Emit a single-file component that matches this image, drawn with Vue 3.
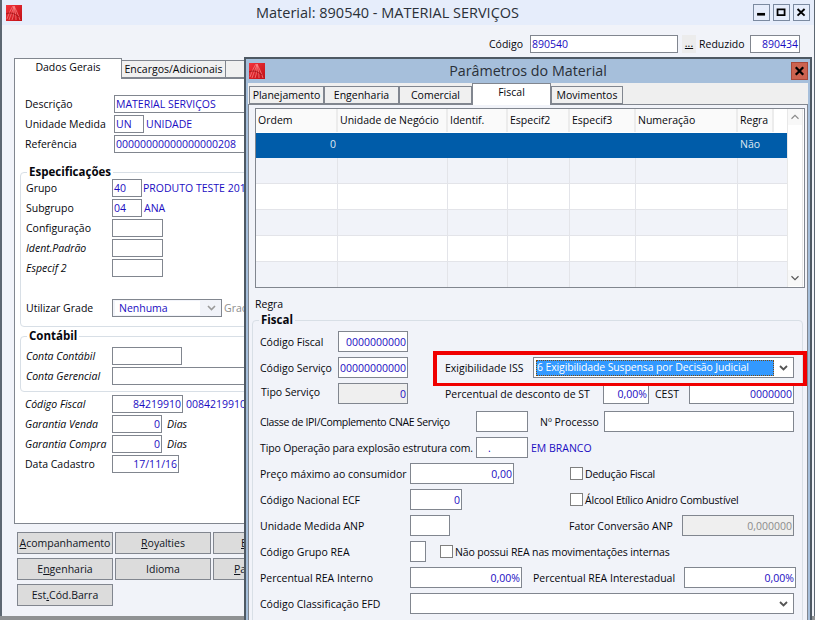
<script setup>
const cols = [
  { t: 'Ordem', c: 'c1' }, { t: 'Unidade de Negócio', c: 'c2' }, { t: 'Identif.', c: 'c3' },
  { t: 'Especif2', c: 'c4' }, { t: 'Especif3', c: 'c5' }, { t: 'Numeração', c: 'c6' },
  { t: 'Regra', c: 'c7' }, { t: '', c: 'c8' }
]
const blankRows = [1, 2, 3, 4, 5]
</script>

<template>
  <div class="screen">
    <div class="win">
      <header class="titlebar">
        <svg class="logo" viewBox="0 0 16 16">
          <defs><linearGradient id="lg" x1="0" y1="0" x2="1" y2="1"><stop offset="0" stop-color="#f4343c"/><stop offset="1" stop-color="#c01016"/></linearGradient></defs>
          <rect width="16" height="16" fill="url(#lg)"/>
          <path d="M1 14 C3 8 5 4 7 1 M3 15 C5 9 7 5 8 1 M6 15 C8 10 8 5 8 1 M10 15 C10 10 9 5 8 2 M14 15 C12 9 10 5 8 1" fill="none" stroke="#ff9c9c" stroke-width=".6"/>
          <path d="M0 9 C4 7 8 8 13 12" fill="none" stroke="#8e0a0e" stroke-width=".7"/>
        </svg>
        <span class="title t-main">Material: 890540 - MATERIAL SERVIÇOS</span>
        <div class="winbtns">
          <span class="wb"><svg viewBox="0 0 16 17"><rect x="3" y="9" width="9" height="3" fill="#000"/></svg></span>
          <span class="wb"><svg viewBox="0 0 16 17"><path d="M3.500 5 H11.500 V11.500 H3.500 Z M3 5 H12" fill="none" stroke="#000" stroke-width="2"/></svg></span>
          <span class="wb"><svg viewBox="0 0 16 17"><path d="M3.500 4.500 L11.500 12 M11.500 4.500 L3.500 12" stroke="#000" stroke-width="2.200"/></svg></span>
        </div>
      </header>

      <div class="coderow">
        <div class="row l1">
          <span class="lb41">Código</span>
          <div class="f w148">890540</div>
          <span class="dots">...</span>
          <span class="lb51 ml3">Reduzido</span>
          <div class="f w50 right">890434</div>
        </div>
      </div>

      <div class="tabs-l">
        <span class="tl active">Dados Gerais</span>
        <span class="tl w104">Encargos/Adicionais</span>
        <span class="tl w60"></span>
      </div>

      <section class="pane-l">
        <div class="row l1"><span class="lb86">Descrição</span><div class="f w200">MATERIAL SERVIÇOS</div></div>
        <div class="row l1"><span class="lb86">Unidade Medida</span><div class="f w30">UN</div><span class="val ml2">UNIDADE</span></div>
        <div class="row l1"><span class="lb86">Referência</span><div class="f w200">00000000000000000208</div></div>

        <fieldset class="grp g1">
          <legend>Especificações</legend>
          <div class="row l2"><span class="lb82">Grupo</span><div class="f w30">40</div><span class="val ml1">PRODUTO TESTE 2016</span></div>
          <div class="row l2"><span class="lb82">Subgrupo</span><div class="f w30">04</div><span class="val ml2">ANA</span></div>
          <div class="row l2"><span class="lb82">Configuração</span><div class="f w51"></div></div>
          <div class="row l2"><span class="lb82 it">Ident.Padrão</span><div class="f w51"></div></div>
          <div class="row l2"><span class="lb82 it">Especif 2</span><div class="f w51"></div></div>
          <div class="row l2 mt22">
            <span class="lb82">Utilizar Grade</span>
            <div class="f w110 combo-off">
              <span class="nenhuma">Nenhuma</span>
              <svg class="chev" viewBox="0 0 9 6"><path d="M1 1 L4.500 4.500 L8 1" fill="none" stroke="#9a9a9a" stroke-width="1.600"/></svg>
            </div>
            <span class="gray ml2">Grade</span>
          </div>
        </fieldset>

        <fieldset class="grp g2">
          <legend>Contábil</legend>
          <div class="row l2"><span class="lb82 it">Conta Contábil</span><div class="f w70"></div></div>
          <div class="row l2"><span class="lb82 it">Conta Gerencial</span><div class="f w200"></div></div>
        </fieldset>

        <div class="lower">
          <div class="row l1"><span class="lb87 it">Código Fiscal</span><div class="f w71 right">84219910</div><span class="val ml3">0084219910</span></div>
          <div class="row l1"><span class="lb87 it">Garantia Venda</span><div class="f w50 right">0</div><span class="it ml5">Dias</span></div>
          <div class="row l1"><span class="lb87 it">Garantia Compra</span><div class="f w50 right">0</div><span class="it ml5">Dias</span></div>
          <div class="row l1"><span class="lb87">Data Cadastro</span><div class="f w67 right">17/11/16</div></div>
        </div>
      </section>

      <div class="btns">
        <div class="btnrow"><button class="b"><u>A</u>companhamento</button><button class="b"><u>R</u>oyalties</button><button class="b part pe"><u>E</u></button></div>
        <div class="btnrow"><button class="b">E<u>n</u>genharia</button><button class="b">Idioma</button><button class="b part pp"><u>P</u>a</button></div>
        <div class="btnrow"><button class="b">Est<u>.</u>Cód.Barra</button></div>
      </div>
    </div>

    <div class="dialog">
      <header class="dlg-title">
        <svg class="logo" viewBox="0 0 16 16">
          <rect width="16" height="16" fill="url(#lg)"/>
          <path d="M1 14 C3 8 5 4 7 1 M3 15 C5 9 7 5 8 1 M6 15 C8 10 8 5 8 1 M10 15 C10 10 9 5 8 2 M14 15 C12 9 10 5 8 1" fill="none" stroke="#ff9c9c" stroke-width=".6"/>
          <path d="M0 9 C4 7 8 8 13 12" fill="none" stroke="#8e0a0e" stroke-width=".7"/>
        </svg>
        <span class="title t-dlg">Parâmetros do Material</span>
        <span class="dlg-x"><svg viewBox="0 0 16 16"><path d="M4 4 L12 12 M12 4 L4 12" stroke="#000" stroke-width="2.400"/></svg></span>
      </header>

      <div class="dlg-tabs">
        <span class="td w75">Planejamento</span>
        <span class="td w75">Engenharia</span>
        <span class="td w73">Comercial</span>
        <span class="td active w79">Fiscal</span>
        <span class="td w72">Movimentos</span>
      </div>

      <section class="dlg-pane">
        <div class="gridbox">
          <div class="gridmain">
            <div class="ghead">
              <span v-for="h in cols" :key="h.c" class="hc" :class="h.c">{{ h.t }}</span>
            </div>
            <div class="grow sel">
              <span class="gc c1 right">0</span><span class="gc c2"></span><span class="gc c3"></span><span class="gc c4"></span><span class="gc c5"></span><span class="gc c6"></span><span class="gc c7">Não</span>
            </div>
            <div v-for="n in blankRows" :key="n" class="grow" :class="{ alt: n % 2 === 1 }">
              <span class="gc c1"></span><span class="gc c2"></span><span class="gc c3"></span><span class="gc c4"></span><span class="gc c5"></span><span class="gc c6"></span><span class="gc c7 wide"></span>
            </div>
          </div>
          <div class="vscroll">
            <svg viewBox="0 0 16 16"><path d="M4 10 L8 6 L12 10" fill="none" stroke="#8a8a8a" stroke-width="1.300"/></svg>
            <svg viewBox="0 0 16 16"><path d="M4 6 L8 10 L12 6" fill="none" stroke="#555" stroke-width="1.300"/></svg>
          </div>
        </div>

        <div class="regra">Regra</div>

        <fieldset class="grp fiscal">
          <legend>Fiscal</legend>
          <div class="row r"><span class="lb78">Código Fiscal</span><div class="f w70 right">0000000000</div></div>
          <div class="row r">
            <span class="lb78">Código Serviço</span><div class="f w70 right">00000000000</div>
            <div class="hl">
              <span class="lb88">Exigibilidade ISS</span>
              <div class="f w261 combo">
                <span class="selected">6 Exigibilidade Suspensa por Decisão Judicial</span>
                <svg class="chev" viewBox="0 0 9 6"><path d="M1 1 L4.500 4.500 L8 1" fill="none" stroke="#555" stroke-width="1.800"/></svg>
              </div>
            </div>
          </div>
          <div class="row r">
            <span class="lb78 nudge">Tipo Serviço</span><div class="f w70 right off blue">0</div>
            <span class="lb158 ml37">Percentual de desconto de ST</span><div class="f w46 right">0,00%</div>
            <span class="ml6 lb34">CEST</span><div class="f w105 right">0000000</div>
          </div>
          <div class="row r mt7">
            <span class="lb216 sq3">Classe de IPI/Complemento CNAE Serviço</span><div class="f w52"></div>
            <span class="lb64 ml12">Nº Processo</span><div class="f w190"></div>
          </div>
          <div class="row r">
            <span class="lb216 sq1">Tipo Operação para explosão estrutura com.</span><div class="f w52 dot">.</div>
            <span class="val ml3">EM BRANCO</span>
          </div>
          <div class="row r">
            <span class="lb150">Preço máximo ao consumidor</span><div class="f w104 right">0,00</div>
            <span class="chk ml56"></span><span class="ml2 sq2">Dedução Fiscal</span>
          </div>
          <div class="row r">
            <span class="lb150">Código Nacional ECF</span><div class="f w52 right">0</div>
            <span class="chk ml108"></span><span class="ml2 sq2">Álcool Etílico Anidro Combustível</span>
          </div>
          <div class="row r">
            <span class="lb150">Unidade Medida ANP</span><div class="f w40"></div>
            <span class="lb113 ml119">Fator Conversão ANP</span><div class="f w112 right off">0,000000</div>
          </div>
          <div class="row r">
            <span class="lb150">Código Grupo REA</span><div class="f w16"></div>
            <span class="chk ml14"></span><span class="ml2 sq1">Não possui REA nas movimentações internas</span>
          </div>
          <div class="row r">
            <span class="lb150">Percentual REA Interno</span><div class="f w112 right">0,00%</div>
            <span class="lb151 ml11">Percentual REA Interestadual</span><div class="f w112 right">0,00%</div>
          </div>
          <div class="row r">
            <span class="lb150">Código Classificação EFD</span>
            <div class="f w384 combo">
              <span></span>
              <svg class="chev" viewBox="0 0 9 6"><path d="M1 1 L4.500 4.500 L8 1" fill="none" stroke="#555" stroke-width="1.800"/></svg>
            </div>
          </div>
        </fieldset>
      </section>
    </div>
  </div>
</template>

<style>
html, body { margin: 0; background: #f1f3f9; }
</style>

<style scoped>
* { box-sizing: border-box; }
.screen {
  position: relative; width: 815px; height: 620px; overflow: hidden;
  font: 10.500px/14px "Open Sans", "Noto Sans", sans-serif; color: #05060c; background: #f1f3f9;
}
.win {
  width: 815px; height: 616px; background: #f1f3f9; overflow: hidden;
  border-left: 2px solid #5d6772; border-right: 1px solid #5d6772;
  display: flex; flex-direction: column;
}
.screen::after { content: ""; display: block; height: 4px; background: #8f9193; }
.titlebar { height: 25px; flex: none; background: #e6edfb; display: flex; align-items: center; padding-left: 4px; padding-right: 4px; }
.logo { width: 16px; height: 16px; flex: none; }
.title { flex: 1; text-align: center; color: #2a3038; }
.t-main { font-size: 14.500px; line-height: 20px; }
.winbtns { display: flex; gap: 3px; }
.wb { width: 17px; height: 17px; border: 1px solid #7b8aa0; display: block; background: #e6edfb; }
.wb svg { display: block; width: 100%; height: 100%; }

.coderow { height: 33px; flex: none; padding: 10px 0 0 487px; }
.dots { width: 14px; height: 18px; line-height: 17px; margin-left: 4px; text-align: center; background: #ececec; text-decoration: underline; }

.f {
  flex: none; height: 100%; border: 1px solid #81868f; background: #fff; color: #1a0cc2;
  padding: 0 1px; overflow: hidden; white-space: nowrap; display: flex; align-items: center;
}
.right { justify-content: flex-end; }
.off { background: #efefef; color: #8c8c8c; }
.off.blue { color: #1a0cc2; }
.val { color: #1a0cc2; white-space: nowrap; }
.gray { color: #8c8c8c; white-space: nowrap; }
.it { font-style: italic; white-space: nowrap; }
.dot { padding-left: 11px; }
.sq1 { letter-spacing: -.13px; }
.sq2 { letter-spacing: -.2px; }
.sq3 { letter-spacing: -.33px; }

.w16 { width: 16px; } .w30 { width: 30px; } .w40 { width: 40px; } .w46 { width: 46px; }
.w50 { width: 50px; } .w51 { width: 51px; } .w52 { width: 52px; } .w67 { width: 67px; }
.w70 { width: 70px; } .w71 { width: 71px; } .w104 { width: 104px; } .w105 { width: 105px; }
.w110 { width: 110px; } .w112 { width: 112px; } .w148 { width: 148px; } .w190 { width: 190px; }
.w200 { width: 200px; } .w261 { width: 261px; } .w384 { width: 384px; }
.w60 { width: 60px; } .w72 { width: 72px; } .w73 { width: 73px; } .w75 { width: 75px; } .w79 { width: 79px; }
.ml1 { margin-left: 1px; } .ml2 { margin-left: 2px; } .ml3 { margin-left: 3px; } .ml5 { margin-left: 5px; }
.ml6 { margin-left: 6px; } .ml11 { margin-left: 11px; } .ml12 { margin-left: 12px; }
.ml14 { margin-left: 14px; } .ml37 { margin-left: 37px; } .ml56 { margin-left: 56px; } .ml108 { margin-left: 108px; }
.ml119 { margin-left: 119px; }
.lb34, .lb41, .lb51, .lb64, .lb78, .lb82, .lb86, .lb87, .lb88, .lb113, .lb150, .lb151, .lb158, .lb216 { flex: none; white-space: nowrap; }
.lb34 { width: 34px; } .lb41 { width: 41px; } .lb51 { width: 51px; } .lb64 { width: 64px; } .lb78 { width: 78px; } .lb82 { width: 86px; } .lb86 { width: 89px; }
.lb87 { width: 87px; } .lb88 { width: 88px; } .lb113 { width: 113px; } .lb150 { width: 150px; } .lb151 { width: 151px; }
.lb158 { width: 158px; } .lb216 { width: 216px; }

.tabs-l { flex: none; height: 20px; margin-left: 12px; display: flex; align-items: flex-end; }
.tl { height: 18px; border: 1px solid #81868f; border-left: 0; background: #f0f0f0; text-align: center; white-space: nowrap; line-height: 16px; flex: none; }
.tl.active { height: 21px; width: 108px; margin-bottom: -1px; background: #fff; border-left: 1px solid #81868f; border-bottom: 0; position: relative; z-index: 1; line-height: 16px; }

.pane-l { flex: none; width: 790px; height: 446px; margin-left: 12px; background: #fff; border: 1px solid #81868f; padding: 16px 0 0 10px; }
.row { display: flex; align-items: center; white-space: nowrap; }
.l1 { height: 18px; margin-bottom: 2px; }
.l2 { height: 18px; margin-bottom: 2px; }
.l2:last-child { margin-bottom: 0; }
.mt22 { margin-top: 22px; }

fieldset.grp { margin: 0; min-width: 0; border: 1px solid #d8dfe6; border-radius: 4px; padding: 0; }
.grp legend { font-weight: 700; font-size: 11.500px; margin-left: 1px; padding: 0 2px; height: 14px; line-height: 14px; }
.g1 { margin: 12px 0 0 -5px !important; width: 560px; padding: 0 0 9px 5px !important; }
.g2 { margin: 2px 0 0 -5px !important; width: 560px; padding: 4px 0 6px 5px !important; }
.lower { margin-top: 3px; }
.combo-off { background: #f1f3f9; padding: 1px 3px 1px 2px; justify-content: space-between; }
.nenhuma { flex: 1; background: #fff; height: 100%; padding-left: 4px; line-height: 15px; margin-right: 7px; }

.btns { flex: none; padding: 8px 0 0 15px; display: flex; flex-direction: column; gap: 4px; }
.btnrow { display: flex; gap: 2px; }
.b { width: 96px; height: 22px; flex: none; display: block; padding: 0; background: #dcdcdc; border: 1px solid #81868f; font: inherit; color: #10141c; white-space: nowrap; }
.b.part { width: 40px; text-align: left; }
.pe { padding-left: 27px; }
.pp { padding-left: 20px; }

.dialog { position: absolute; left: 244px; top: 57px; width: 568px; height: 570px; background: #a6bfdb; border: 2px solid #4e5964; padding: 0 2px; }
.dlg-title { height: 24px; display: flex; align-items: center; padding-left: 1px; }
.t-dlg { font-size: 14.300px; line-height: 20px; }
.dlg-x { width: 17px; height: 18px; background: #cc6350; border: 1px solid #a8483a; }
.dlg-x svg { display: block; width: 100%; height: 100%; }
.dlg-tabs { height: 21px; background: #efefef; display: flex; align-items: flex-end; padding-left: 1px; }
.td { height: 18px; flex: none; background: #f0f0f0; border: 1px solid #81868f; text-align: center; line-height: 16px; white-space: nowrap; }
.td.active { height: 22px; margin-bottom: -1px; background: #fff; border-bottom: 0; position: relative; z-index: 1; line-height: 16px; }
.dlg-pane { height: 530px; background: #f1f3f9; border: 1px solid #81868f; padding: 3px 4px 0 3px; }

.gridbox { height: 180px; margin: 0 -2px 0 3px; border: 1px solid #81868f; background: #fff; display: flex; overflow: hidden; }
.gridmain { width: 531px; flex: none; }
.ghead { display: flex; height: 24px; background: #fff; }
.hc { flex: none; height: 23px; background: #fafafa; border-right: 2px solid #ececec; padding-left: 2px; line-height: 22px; }
.c1 { width: 82px; } .c2 { width: 110px; } .c3 { width: 60px; } .c4 { width: 62px; } .c5 { width: 66px; } .c6 { width: 102px; } .c7 { width: 36px; } .c8 { width: 13px; border: 0; background: #fff; }
.grow { display: flex; height: 26px; background: #fff; border-bottom: 1px solid #e3e4e9; }
.grow.alt { background: #f1f3f9; }
.grow.sel { height: 25px; background: #005ca9; color: #dfe9f3; border: 0; }
.gc { flex: none; height: 100%; border-right: 1px solid #e3e4e9; padding: 0 2px; display: flex; align-items: center; }
.sel .gc { border: 0; padding-bottom: 3px; }
.gc.right { justify-content: flex-end; padding-right: 2px; }
.gc.wide { width: 49px; border-right: 0; }
.vscroll { width: 16px; flex: none; background: #fff; display: flex; flex-direction: column; justify-content: space-between; padding-bottom: 1px; border: 1px solid #e8e8e8; border-width: 0 1px; }
.vscroll svg { width: 14px; height: 16px; display: block; background: #f8f8f8; }

.regra { margin: 9px 0 2px 3px; height: 14px; }
.fiscal { width: 551px; padding: 0 0 0 7px !important; height: 320px; }
.fiscal legend { margin-left: -1px; }
.r { height: 21px; margin-top: 5px; }
.fiscal > .r:first-of-type { margin-top: 4px; }
.mt7 { margin-top: 7px; }
.nudge { padding-left: 1px; position: relative; top: -2px; }
.hl { position: relative; display: flex; align-items: center; height: 21px; margin-left: 25px; padding-left: 12px; }
.hl::after { content: ""; position: absolute; left: 0; top: -6px; width: 366px; height: 28px; border: 4px solid #f00000; border-bottom-width: 3px; pointer-events: none; }
.combo { padding: 2px 3px 1px 2px; justify-content: space-between; }
.w261.combo { height: 21px; }
.selected { background: #3399ff; color: #fff; width: 238px; height: 100%; outline: 1px dotted #7a4a10; outline-offset: -1px; padding-left: 1px; line-height: 15px; overflow: hidden; letter-spacing: -.13px; }
.chev { width: 9px; height: 6px; flex: none; margin-right: 2px; }
.chk { width: 13px; height: 13px; flex: none; border: 1px solid #7f7f7f; background: #fff; }
</style>
